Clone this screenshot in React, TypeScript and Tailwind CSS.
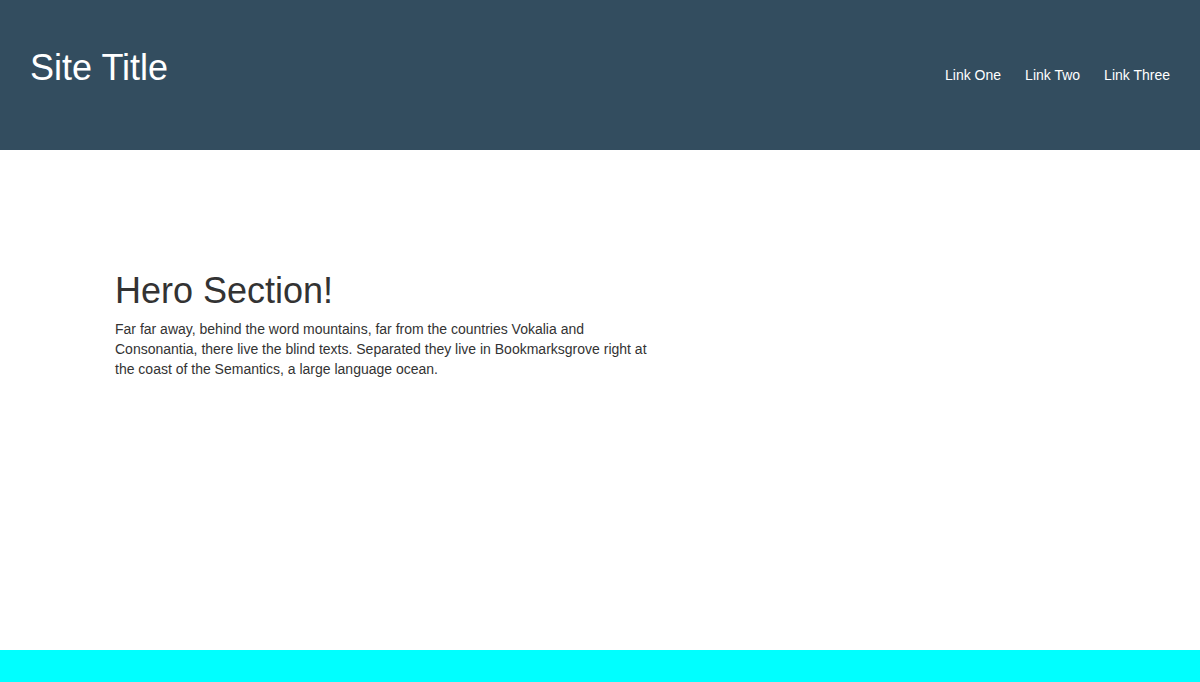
const links = ["Link One", "Link Two", "Link Three"];

export default function App() {
  return (
    <div className="min-h-screen flex flex-col bg-white text-[#333]" style={{ fontFamily: '"Liberation Sans", Arial, sans-serif' }}>
      <header className="h-[150px] bg-[#334d5f] px-[30px] flex items-center justify-between text-white">
        <h1 className="text-[36px] leading-[41px] -mt-[16px]">Site Title</h1>
        <nav className="flex gap-6 text-[14px]">
          {links.map((l) => (
            <a key={l} href="#" className="text-white">
              {l}
            </a>
          ))}
        </nav>
      </header>

      <main className="h-[500px] px-[115px] pt-[120px]">
        <h2 className="text-[36px] leading-[41px]">Hero Section!</h2>
        <p className="mt-[8px] max-w-[545px] text-[14px] leading-[20px]">
          Far far away, behind the word mountains, far from the countries Vokalia and Consonantia, there live the
          blind texts. Separated they live in Bookmarksgrove right at the coast of the Semantics, a large language
          ocean.
        </p>
      </main>

      <footer className="h-[32px] bg-[#00ffff]" />
    </div>
  );
}
